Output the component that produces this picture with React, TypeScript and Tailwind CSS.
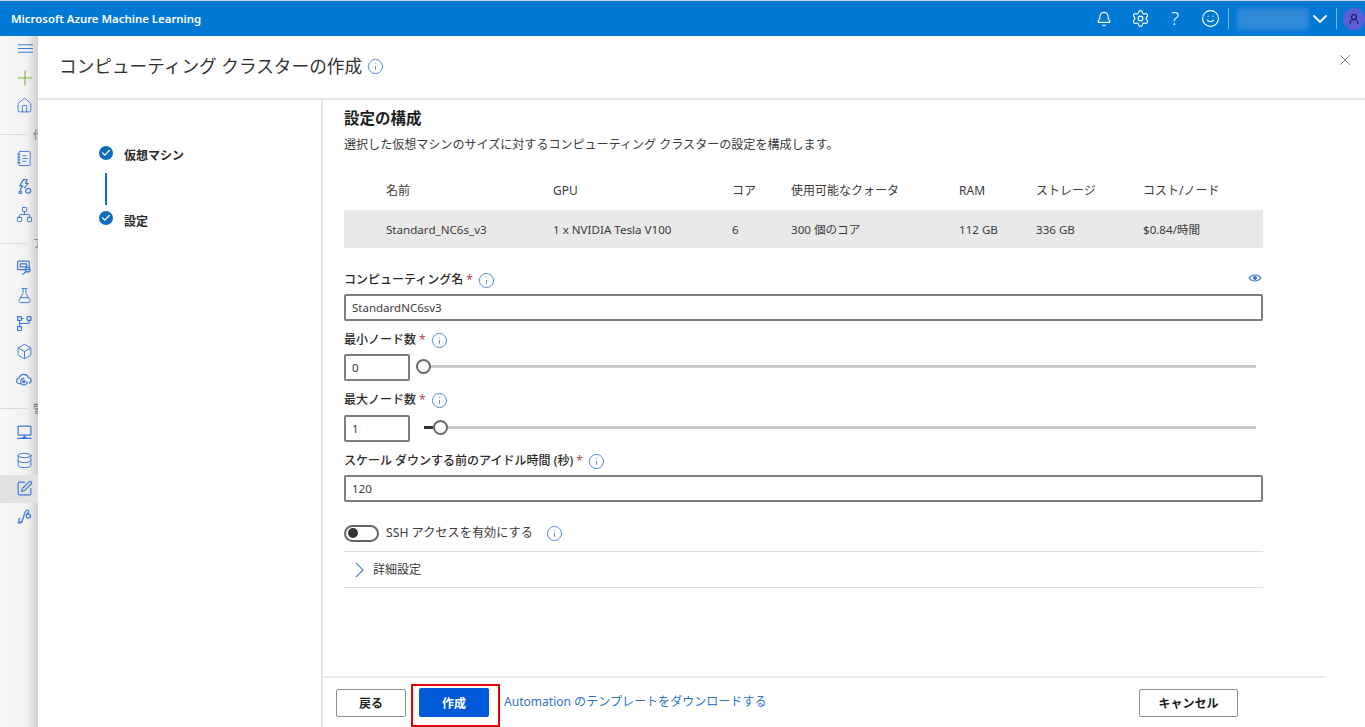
import { Bell, Box, ChevronDown, Database, FlaskConical, Home, Info, Network, NotebookText, Plus, Settings, Smile, SquarePen, UserRound, X, Check } from "lucide-react";
import type { ReactNode } from "react";

const FONT = "font-['Noto_Sans','Noto_Sans_CJK_JP',sans-serif]";

function Svg({ children }: { children: ReactNode }) {
  return (
    <svg width="17" height="17" viewBox="0 0 16 16" fill="none" stroke="currentColor" strokeWidth="1.15" strokeLinecap="round" strokeLinejoin="round">
      {children}
    </svg>
  );
}

const AutoMl = () => (
  <Svg>
    <path d="M7 1.5 3.5 7.5h3L4 11" />
    <path d="M7 1.5h3.5L9 5h2.5L8 9" />
    <circle cx="11.5" cy="12" r="2.3" />
    <circle cx="4" cy="13.5" r="1.2" />
  </Svg>
);
const DataIcon = () => (
  <Svg>
    <rect x="1.5" y="2" width="11" height="8" rx="1" />
    <path d="M4 4.5h6v3H4z" />
    <circle cx="11" cy="10" r="2.2" />
    <path d="m9.4 11.7-3 2.8" />
  </Svg>
);
const Pipeline = () => (
  <Svg>
    <rect x="1.5" y="1.5" width="3.6" height="3.6" rx=".5" />
    <rect x="10.5" y="1.5" width="3.6" height="3.6" rx=".5" />
    <rect x="1.5" y="11" width="3.6" height="3.6" rx=".5" />
    <path d="M3.3 5.1V11M5.1 3.3h1.6M12.3 5.1v1.7a1.2 1.2 0 0 1-1.2 1.2H3.3" />
  </Svg>
);
const Endpoint = () => (
  <Svg>
    <path d="M4 12H3.4A2.6 2.6 0 0 1 3 6.8 4.4 4.4 0 0 1 11.4 6a2.9 2.9 0 0 1 1.4 5.4" />
    <path d="M10.5 10a3 3 0 1 1-3-3" />
    <circle cx="7.5" cy="10" r="1" fill="currentColor" />
  </Svg>
);
const Compute = () => (
  <Svg>
    <rect x="2" y="2" width="12" height="8.5" rx=".6" />
    <path d="M8 10.5v2.5M1.5 13.5h13M5.5 13.5 8 12l2.5 1.5" />
  </Svg>
);
const Linked = () => (
  <Svg>
    <path d="M1.8 13.5c1.5 1.5 3.3.5 4-1.3l2.6-7.8c.5-1.6 2-2.8 3-2.2 1 .6.4 2.4-1 3.3" />
    <path d="M5.7 12.4C4.6 13.6 3 13.4 2.5 12.1c-.3-1 .4-2 1.6-2.2" />
    <circle cx="11.6" cy="7.6" r="2" />
  </Svg>
);

function NavRow({ icon, active }: { icon: ReactNode; active?: boolean }) {
  return (
    <div className={`flex h-[28px] items-center pb-[2px] pl-[16px] text-[#3d78d6] ${active ? "bg-[#e2e2e2]" : ""}`}>{icon}</div>
  );
}

function NavDivider({ label }: { label: string }) {
  return (
    <div className="flex h-[25px] items-center gap-[6px] pt-[3px] whitespace-nowrap">
      <div className="h-px w-[27px] shrink-0 bg-[#d9d9d9]" />
      <span className="text-[11px] leading-none text-[#777]">{label}</span>
    </div>
  );
}

function Label({ text, className = "" }: { text: string; className?: string }) {
  return (
    <div className={`flex h-[20px] items-center text-[12px] font-medium text-[#2b2a29] ${className}`}>
      <span>{text}</span>
      <span className="ml-[3px] font-normal text-[#b4474c]">*</span>
      <Info className="ml-[5px] text-[#3f79d4]" size={17} strokeWidth={1.25} />
    </div>
  );
}

const inputClass =
  "block h-[27px] rounded-[2px] border-2 border-[#7d7d7d] bg-white px-[6px] text-[11.5px] text-[#3b3a39] outline-none";

const Thumb = () => <div className="size-[15px] shrink-0 rounded-full border-2 border-[#666] bg-white" />;
const Track = () => <div className="h-[3px] flex-1 bg-[#c8c8c8]" />;

function CheckDot() {
  return (
    <div className="flex size-[14px] items-center justify-center rounded-full bg-[#0f6cbd] text-white">
      <Check size={10} strokeWidth={3} />
    </div>
  );
}

export default function App() {
  const cols = "grid grid-cols-[167px_179px_59px_168px_77px_107px_1fr] pl-[42px] text-[#3b3a39]";
  return (
    <div className={`flex h-[727px] w-[1365px] flex-col overflow-hidden bg-white ${FONT}`}>
      <header className="flex h-[36px] shrink-0 items-center border-t border-[#c9d3dc] bg-[#0078d4] text-white">
        <div className="ml-[11px] text-[11.4px] font-semibold">Microsoft Azure Machine Learning</div>
        <div className="ml-auto flex h-full items-center">
          <Bell size={16} strokeWidth={1.7} />
          <Settings className="ml-[19px]" size={19} strokeWidth={1.4} />
          <span className="ml-[19px] w-[12px] text-center text-[19px] font-light leading-none">?</span>
          <Smile className="ml-[20px]" size={19} strokeWidth={1.4} />
          <div className="ml-[8px] h-[21px] w-px bg-[#79b5e4]" />
          <div className="ml-[8px] h-[22px] w-[72px] rounded-[3px] bg-[#2f8ad8] blur-[2px]" />
          <ChevronDown className="-mx-[1px]" size={24} strokeWidth={1.8} />
          <div className="ml-[5px] h-[21px] w-px bg-[#79b5e4]" />
          <div className="ml-[6px] flex size-[22px] items-center justify-center rounded-full bg-[#5a5fd6] text-[#16184f]">
            <UserRound size={12} strokeWidth={2.2} />
          </div>
        </div>
      </header>

      <div className="flex min-h-0 flex-1">
        <aside className="w-[38px] shrink-0 overflow-hidden bg-gradient-to-r from-[#f8f8f8] via-[#f2f2f2] via-70% to-[#d0d0d0]">
          <div className="flex h-[28px] items-start pl-[18px] pt-[8px] text-[#3d78d6]">
            <svg width="15" height="9" viewBox="0 0 15 9" stroke="currentColor" strokeWidth="1.1">
              <path d="M0 .8h15M0 4.5h15M0 8.2h15" />
            </svg>
          </div>
          <div className="flex h-[28px] items-center pl-[13px] text-[#7cb342]">
            <Plus size={24} strokeWidth={1.1} />
          </div>
          <NavRow icon={<Home size={17} strokeWidth={1.35} />} />
          <NavDivider label="作成者" />
          <NavRow icon={<NotebookText size={17} strokeWidth={1.35} />} />
          <NavRow icon={<AutoMl />} />
          <NavRow icon={<Network size={17} strokeWidth={1.35} />} />
          <NavDivider label="アセット" />
          <NavRow icon={<DataIcon />} />
          <NavRow icon={<FlaskConical size={17} strokeWidth={1.35} />} />
          <NavRow icon={<Pipeline />} />
          <NavRow icon={<Box size={17} strokeWidth={1.35} />} />
          <NavRow icon={<Endpoint />} />
          <NavDivider label="管理" />
          <NavRow icon={<Compute />} />
          <NavRow icon={<Database size={17} strokeWidth={1.35} />} />
          <NavRow active icon={<SquarePen size={17} strokeWidth={1.6} />} />
          <NavRow icon={<Linked />} />
        </aside>

        <main className="flex min-w-0 flex-1 flex-col">
          <div className="flex h-[64px] shrink-0 items-center border-b-2 border-[#e6e6e6] pb-[2px] pl-[21px] pr-[11px]">
            <h1 className="text-[17.65px] font-normal text-[#323130]">コンピューティング クラスターの作成</h1>
            <Info className="ml-[5px] text-[#3f79d4]" size={17} strokeWidth={1.2} />
            <X className="ml-auto -mt-[12px] text-[#6f7b85]" size={18} strokeWidth={1.2} />
          </div>

          <div className="flex min-h-0 flex-1">
            <nav className="w-[285px] shrink-0 border-r-2 border-[#e6e6e6] pl-[61px] pt-[46px] text-[12px] font-semibold text-[#2b2a29]">
              <div className="flex items-start gap-[11px]">
                <CheckDot />
                <span className="mt-[1px] leading-[18px]">仮想マシン</span>
              </div>
              <div className="ml-[6px] mt-[8px] h-[32px] w-[2px] bg-[#0f6cbd]" />
              <div className="mt-[6px] flex items-start gap-[11px]">
                <CheckDot />
                <span className="mt-[2px] leading-[18px]">設定</span>
              </div>
            </nav>

            <section className="flex min-w-0 flex-1 flex-col">
              <div className="min-h-0 flex-1 pl-[21px] pr-[102px] pt-[8px]">
                <h2 className="flex h-[22px] items-center text-[15.5px] font-semibold text-[#201f1e]">設定の構成</h2>
                <p className="mt-[5px] flex h-[20px] items-center text-[12.05px] text-[#3b3a39]">
                  選択した仮想マシンのサイズに対するコンピューティング クラスターの設定を構成します。
                </p>

                <div className={`${cols} mt-[25px] h-[30px] items-start pt-[2px] text-[12px]`}>
                  <div>名前</div>
                  <div>GPU</div>
                  <div>コア</div>
                  <div>使用可能なクォータ</div>
                  <div>RAM</div>
                  <div>ストレージ</div>
                  <div>コスト/ノード</div>
                </div>
                <div className={`${cols} h-[38px] items-center bg-[#e9e9e9] pt-[1px] text-[11.6px]`}>
                  <div>Standard_NC6s_v3</div>
                  <div>1 x NVIDIA Tesla V100</div>
                  <div>6</div>
                  <div>300 個のコア</div>
                  <div>112 GB</div>
                  <div>336 GB</div>
                  <div>$0.84/時間</div>
                </div>

                <div className="mt-[22px] flex items-center justify-between">
                  <Label text="コンピューティング名" />
                  <svg className="mb-[5px] mr-px" width="14" height="10" viewBox="0 0 14 10" fill="none" stroke="#3f79d4" strokeWidth="1.2">
                    <path d="M1 5c2.8-4 9.2-4 12 0-2.8 4-9.2 4-12 0Z" />
                    <circle cx="7" cy="5" r="1.4" fill="#3f79d4" />
                  </svg>
                </div>
                <input readOnly value="StandardNC6sv3" className={`${inputClass} mt-[4px] w-full`} />

                <Label text="最小ノード数" className="mt-[9px]" />
                <div className="mt-[4px] flex items-center">
                  <input readOnly value="0" className={`${inputClass} w-[66px]`} />
                  <div className="ml-[6px] flex flex-1 items-center pb-[2px] pr-[7px]">
                    <Thumb />
                    <Track />
                  </div>
                </div>

                <Label text="最大ノード数" className="mt-[9px]" />
                <div className="mt-[5px] flex items-center">
                  <input readOnly value="1" className={`${inputClass} w-[66px]`} />
                  <div className="ml-[14px] flex flex-1 items-center pb-[2px] pr-[7px]">
                    <div className="h-[3px] w-[9px] bg-[#333]" />
                    <Thumb />
                    <Track />
                  </div>
                </div>

                <Label text="スケール ダウンする前のアイドル時間 (秒)" className="mt-[9px]" />
                <input readOnly value="120" className={`${inputClass} mt-[4px] w-full`} />

                <div className="mt-[21px] flex h-[20px] items-center text-[12.2px] text-[#3b3a39]">
                  <div className="flex h-[17px] w-[35px] items-center rounded-full border-2 border-[#666] pl-[2px]">
                    <div className="size-[10px] rounded-full bg-[#333]" />
                  </div>
                  <span className="ml-[7px]">SSH アクセスを有効にする</span>
                  <Info className="ml-[13px] text-[#3f79d4]" size={17} strokeWidth={1.25} />
                </div>

                <div className="mt-[8px] flex h-[37px] items-center border-y border-[#dcdcdc] text-[12px] text-[#3b3a39]">
                  <svg className="ml-[11px]" width="9" height="16" viewBox="0 0 9 16" fill="none" stroke="#4f82d6" strokeWidth="1.1">
                    <path d="m1 1 7 7-7 7" />
                  </svg>
                  <span className="ml-[9px]">詳細設定</span>
                </div>
              </div>

              <footer className="mr-[39px] flex h-[51px] shrink-0 items-start border-t-2 border-[#ebebeb] pl-[13px]">
                <button className="mt-[11px] h-[28px] w-[70px] rounded-[2px] border-[1.5px] border-[#8f8f8f] bg-white pt-[1px] text-[12px] font-semibold text-[#201f1e]">
                  戻る
                </button>
                <div className="ml-[5px] mt-[6px] h-[43px] w-[89px] border-2 border-[#e60000] px-[6px] pt-[2px]">
                  <button className="h-[29px] w-[70px] rounded-[2px] bg-[#005ad9] pt-[2px] text-[12px] font-semibold text-white">作成</button>
                </div>
                <a className="ml-[4px] mt-[15px] text-[12.05px] leading-[18px] text-[#2f6fd0]" href="#">
                  Automation のテンプレートをダウンロードする
                </a>
                <button className="ml-auto mr-[88px] mt-[11px] h-[28px] w-[99px] rounded-[2px] border-[1.5px] border-[#8f8f8f] bg-white pt-[1px] text-[12px] font-semibold text-[#201f1e]">
                  キャンセル
                </button>
              </footer>
            </section>
          </div>
        </main>
      </div>
    </div>
  );
}
